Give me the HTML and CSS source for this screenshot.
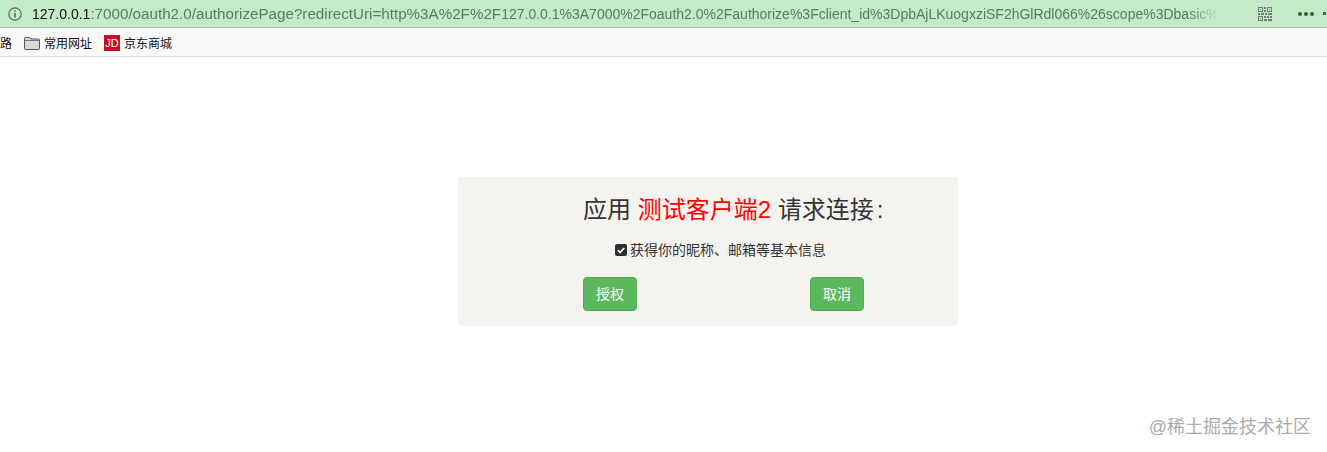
FILE: index.html
```html
<!DOCTYPE html>
<html lang="zh-CN">
<head>
<meta charset="utf-8">
<title>授权</title>
<link rel="stylesheet" href="styles.css">
</head>
<body>
<header class="addressbar">
  <svg class="icon-info" viewBox="0 0 14 14" width="14" height="14"><circle cx="7" cy="7" r="6.200" fill="none" stroke="#5a6a5c" stroke-width="1.200"/><rect x="6.300" y="6" width="1.400" height="4.500" fill="#4a5a4c"/><rect x="6.300" y="3.400" width="1.400" height="1.500" fill="#4a5a4c"/></svg>
  <div class="url"><span class="host">127.0.0.1</span><span class="seg-wide">:7000/oauth2.0/authorizePage?redirectUri=http%3A%2F%2F</span>127.0.0.1%3A7000%2Foauth2.0%2Fauthorize%3Fclient_id%3DpbAjLKuogxziSF2hGlRdl066%26scope%3Dbasic%</div>
  <svg class="icon-qr" viewBox="0 0 14 14" width="14" height="14" fill="#6f7a72"><path d="M0 0h5v5H0zM1 1v3h3V1zM9 0h5v5H9zM10 1v3h3V1zM0 9h5v5H0zM1 10v3h3v-3zM2 2h1v1H2zM11 2h1v1h-1zM2 11h1v1H2zM6 0h2v2H6zM6 3h2v2H6zM0 6h2v2H0zM3 6h3v2H3zM7 6h2v2H7zM10 6h4v2h-4zM6 9h2v2H6zM9 9h2v2H9zM12 9h2v2h-2zM6 12h3v2H6zM10 12h4v2h-4z" fill-rule="evenodd"/></svg>
  <span class="dots"><i></i><i></i><i></i></span>
  <span class="chevron"></span>
</header>
<nav class="bookmarks">
  <span class="bm bm-cut">路</span>
  <span class="bm bm-folder">
    <svg viewBox="0 0 16 14" width="16" height="14"><path d="M.5 2.500A1 1 0 0 1 1.500 1.500h4l1.500 1.500h7.500a1 1 0 0 1 1 1v8.500a1 1 0 0 1-1 1h-13a1 1 0 0 1-1-1z" fill="#d9d9d9" stroke="#555"/><path d="M1 4.500h14" stroke="#777"/></svg>
    常用网址
  </span>
  <span class="bm bm-jd"><span class="jd">JD</span>京东商城</span>
</nav>
<main class="page">
  <section class="card">
    <h1 class="title">应用 <span class="client">测试客户端2</span> 请求连接<span class="colon">:</span></h1>
    <label class="scope">
      <svg class="check" viewBox="0 0 12 12" width="12" height="12"><rect width="12" height="12" rx="2" fill="#2f2f2f"/><path d="M2.800 6.200l2.300 2.300 4.200-4.500" fill="none" stroke="#fff" stroke-width="1.800"/></svg>
      获得你的昵称、邮箱等基本信息
    </label>
    <div class="actions">
      <button class="btn">授权</button>
      <button class="btn">取消</button>
    </div>
  </section>
</main>
<div class="watermark">@稀土掘金技术社区</div>
</body>
</html>
```
FILE: styles.css
```css
* { box-sizing: border-box; }
html, body { margin: 0; padding: 0; height: 100%; overflow: hidden; }
body { background: #fff; font-family: "Liberation Sans", "Noto Sans CJK SC", sans-serif; color: #333; position: relative; }

.addressbar { height: 28px; display: flex; align-items: center; padding: 0 0 0 8px; background: #c3ecc6; border-bottom: 1px solid #a3c2a8; }
.icon-info { flex: none; margin-right: 10px; }
.url { width: 1190px; flex: none; white-space: nowrap; overflow: hidden; font-size: 14px; color: #5c7a63; -webkit-mask-image: linear-gradient(to right, #000 1155px, transparent 1188px); mask-image: linear-gradient(to right, #000 1155px, transparent 1188px); }
.host { color: #111; }
.seg-wide { font-size: 15.200px; }
.icon-qr { flex: none; margin-left: 36px; }
.dots { display: flex; gap: 2px; margin-left: 26px; flex: none; }
.dots i { width: 4px; height: 4px; border-radius: 50%; background: #3f5545; }
.chevron { flex: none; width: 3px; height: 3px; margin-left: 9px; background: #4f6355; }

.bookmarks { height: 29px; display: flex; align-items: center; padding-top: 1px; background: #f9f9fa; border-bottom: 1px solid #e2e2e2; font-size: 12px; color: #111; font-family: "Noto Sans CJK SC", sans-serif; }
.bm { display: flex; align-items: center; white-space: nowrap; }
.bm-cut { width: 12px; overflow: hidden; }
.bm-folder { margin-left: 12px; gap: 4px; }
.bm-jd { margin-left: 12px; gap: 4px; }
.jd { width: 16px; height: 16px; background: #c4122a; color: #fff; font: 11px/16px "Liberation Sans", sans-serif; text-align: center; }

.page { padding: 120px 0 0 458px; }
.card { width: 500px; height: 149px; background: #f5f3ef; padding: 17px 0 0 125px; border-radius: 2px; }
.title { margin: 0; font-size: 24px; line-height: 32px; font-weight: 400; color: #333; white-space: nowrap; }
.client { color: #f00; }
.colon { margin-left: 3px; }
.scope { display: flex; align-items: center; gap: 3px; margin: 14px 0 0 32px; font-size: 14px; line-height: 20px; color: #333; }
.check { flex: none; }
.actions { display: flex; justify-content: space-between; width: 281px; margin-top: 17px; }
.btn { width: 54px; height: 34px; padding: 0; border: 1px solid #4cae4c; border-radius: 4px; background: #5cb85c; color: #fff; font: 14px/20px "Liberation Sans", "Noto Sans CJK SC", sans-serif; }

.watermark { position: absolute; right: 16px; top: 414px; font-size: 18px; line-height: 26px; color: #aaa; white-space: nowrap; }
```
